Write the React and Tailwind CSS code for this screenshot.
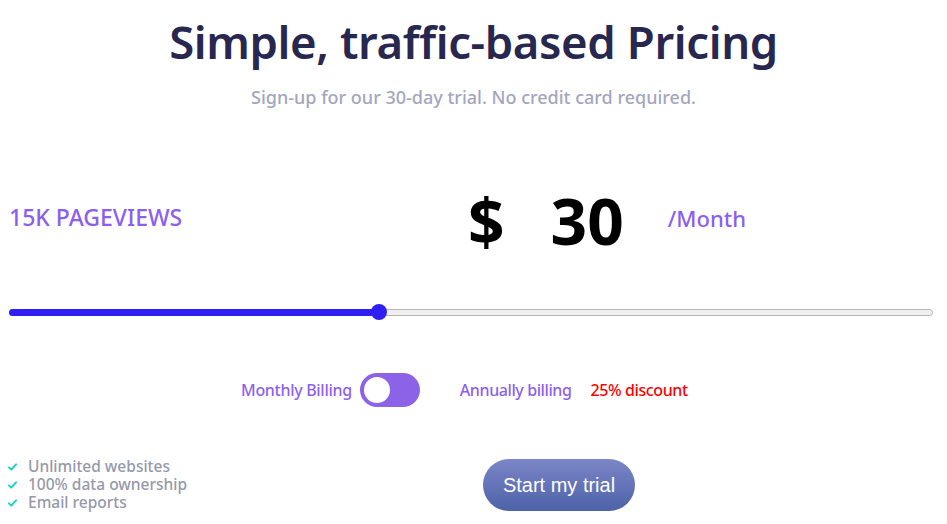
import React, { useState } from "react";

const font = { fontFamily: '"Noto Sans", "Open Sans", sans-serif' };

function Check() {
  return (
    <svg viewBox="0 0 10 8" className="w-[9px] h-[8px] mt-[6px] shrink-0" aria-hidden="true">
      <path d="M1 4.5 L3.6 7 L9 1" fill="none" stroke="#10d5c2" strokeWidth="2" strokeLinecap="round" strokeLinejoin="round" />
    </svg>
  );
}

function Feature({ children }) {
  return (
    <li className="flex items-start gap-[11px] h-[18px]">
      <Check />
      <div className="text-[15.5px] leading-[18px] text-[#9699ab] font-medium whitespace-nowrap">{children}</div>
    </li>
  );
}

export default function App() {
  const [value] = useState(40);
  const [annual, setAnnual] = useState(false);

  return (
    <div className="w-[947px] h-[524px] bg-white overflow-hidden" style={font}>
      <header className="pt-[13px] text-center">
        <h1 className="text-[45.5px] leading-[56px] font-semibold text-[#282750] tracking-[-0.4px]">
          Simple, traffic-based Pricing
        </h1>
        <p className="mt-[16px] text-[18px] leading-[24px] font-medium text-[#a3a6bf]">
          Sign-up for our 30-day trial. No credit card required.
        </p>
      </header>

      <div className="mt-[72px] flex items-center h-[80px] px-[9px]">
        <div className="w-[459px] text-[23px] font-medium text-[#8c5ff0] -mt-[7px]">15K PAGEVIEWS</div>
        <div className="flex items-center text-[64px] font-bold text-black leading-none">
          <span>$</span>
          <span className="ml-[46px]">30</span>
        </div>
        <div className="ml-[44px] text-[22px] font-medium text-[#8c5ff0] -mt-[6px]">/Month</div>
      </div>

      <div className="mt-[42px] pl-[9px] pr-[14px]">
        <div className="relative h-[18px] flex items-center">
          <div className="w-full h-[7px] rounded-full bg-[#efefef] border border-[#b5b5b5]" />
          <div
            className="absolute left-0 top-[5.5px] h-[7px] rounded-full bg-[#2f1ff2]"
            style={{ width: `${value}%` }}
          />
          <div
            className="absolute top-[1px] w-[16px] h-[16px] rounded-full bg-[#2f1ff2] -translate-x-1/2"
            style={{ left: `${value}%` }}
          />
        </div>
      </div>

      <div className="mt-[52px] flex items-center pl-[241px] text-[16px] font-medium text-[#8c5ff0]">
        <span className="tracking-[-0.3px]">Monthly Billing</span>
        <button
          onClick={() => setAnnual(!annual)}
          className="ml-[8px] w-[60px] h-[34px] rounded-full bg-[#8c62e6] flex items-center px-[4px]"
        >
          <span className={`w-[26px] h-[26px] rounded-full bg-white ${annual ? "ml-auto" : ""}`} />
        </button>
        <span className="ml-[40px] tracking-[-0.4px]">Annually billing</span>
        <span className="ml-[19px] text-[#ff0000] tracking-[-0.4px]">25% discount</span>
      </div>

      <div className="mt-[50px] flex items-start">
        <ul className="w-[483px] pl-[8px]">
          <Feature>Unlimited websites</Feature>
          <Feature>100% data ownership</Feature>
          <Feature>Email reports</Feature>
        </ul>
        <button
          className="mt-[2px] w-[152px] h-[52px] rounded-full text-white text-[20px] bg-gradient-to-b from-[#7b86c8] to-[#4e62a7]"
          style={{ fontFamily: '"Liberation Sans", Arial, sans-serif' }}
        >
          Start my trial
        </button>
      </div>
    </div>
  );
}
